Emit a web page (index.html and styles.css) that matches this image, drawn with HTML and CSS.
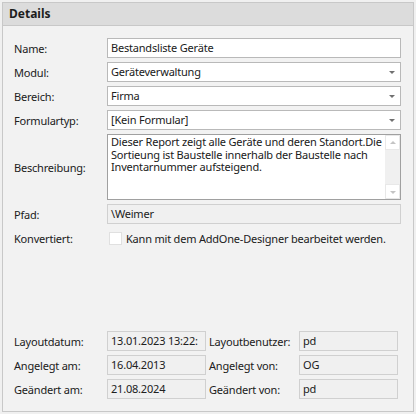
FILE: index.html
```html
<!DOCTYPE html>
<html lang="de">
<head>
<meta charset="utf-8">
<title>Details</title>
<link rel="stylesheet" href="styles.css">
</head>
<body>
<div class="panel">
  <div class="header">Details</div>
  <div class="body">
    <div class="form">
      <div class="label">Name:</div>
      <div class="field">Bestandsliste Geräte</div>

      <div class="label">Modul:</div>
      <div class="field combo">Geräteverwaltung<span class="arrow"></span></div>

      <div class="label">Bereich:</div>
      <div class="field combo">Firma<span class="arrow"></span></div>

      <div class="label">Formulartyp:</div>
      <div class="field combo">[Kein Formular]<span class="arrow"></span></div>

      <div class="label">Beschreibung:</div>
      <div class="memo">
        <div class="memo-text">Dieser Report zeigt alle Geräte und deren Standort.Die Sortieung ist Baustelle innerhalb der Baustelle nach Inventarnummer aufsteigend.</div>
        <div class="scroll">
          <div class="sbtn"><span class="up"></span></div>
          <div class="sbtn"><span class="down"></span></div>
        </div>
      </div>

      <div class="label">Pfad:</div>
      <div class="field disabled">\Weimer</div>

      <div class="label">Konvertiert:</div>
      <div class="check-row"><span class="check"></span><span>Kann mit dem AddOne-Designer bearbeitet werden.</span></div>
    </div>

    <div class="meta">
      <div class="label">Layoutdatum:</div>
      <div class="field disabled">13.01.2023 13:22:</div>
      <div class="label">Layoutbenutzer:</div>
      <div class="field disabled">pd</div>

      <div class="label">Angelegt am:</div>
      <div class="field disabled">16.04.2013</div>
      <div class="label">Angelegt von:</div>
      <div class="field disabled">OG</div>

      <div class="label">Geändert am:</div>
      <div class="field disabled">21.08.2024</div>
      <div class="label">Geändert von:</div>
      <div class="field disabled">pd</div>
    </div>
  </div>
</div>
</body>
</html>
```
FILE: styles.css
```css
html, body {
  margin: 0;
  padding: 0;
  background: #f0f0f0;
}
body {
  font-family: "Noto Sans", "Liberation Sans", sans-serif;
  font-size: 11px;
  letter-spacing: -0.2px;
  color: #202020;
  width: 416px;
  height: 414px;
  overflow: hidden;
}
.panel {
  margin: 2px;
  width: 410px;
  height: 408px;
  border: 1px solid #c8c8c8;
  background: #f2f2f2;
  display: flex;
  flex-direction: column;
}
.header {
  height: 22px;
  line-height: 22px;
  padding-left: 6px;
  background: #dcdcdc;
  border-bottom: 1px solid #c8c8c8;
  font-weight: bold;
  font-size: 12px;
  letter-spacing: 0;
  color: #1e1e1e;
}
.body {
  flex: 1;
  display: flex;
  flex-direction: column;
  padding: 12px 12px 12px 11px;
}
.form {
  display: grid;
  grid-template-columns: 93px 294px;
  row-gap: 4px;
  align-items: center;
}
.label {
  white-space: nowrap;
}
.field {
  position: relative;
  box-sizing: border-box;
  height: 20px;
  line-height: 18px;
  padding-left: 3px;
  border: 1px solid #b9b9b9;
  background: #ffffff;
  white-space: nowrap;
  overflow: hidden;
}
.field.disabled {
  background: #f0f0f0;
  border-color: #d0d0d0;
}
.arrow {
  position: absolute;
  right: 5px;
  top: 8px;
  width: 0;
  height: 0;
  border-left: 3.5px solid transparent;
  border-right: 3.5px solid transparent;
  border-top: 3px solid #707070;
}
.memo {
  box-sizing: border-box;
  height: 66px;
  border: 1px solid #a0a0a0;
  background: #ffffff;
  display: flex;
}
.memo-text {
  flex: 1;
  padding: 1px 3px 0 3px;
  line-height: 12.7px;
}
.scroll {
  width: 15px;
  background: #f0f0f0;
  display: flex;
  flex-direction: column;
  justify-content: space-between;
}
.sbtn {
  box-sizing: border-box;
  height: 15px;
  background: #ffffff;
  border: 1px solid #e8e8e8;
  position: relative;
}
.up, .down {
  position: absolute;
  left: 3.5px;
  width: 0;
  height: 0;
  border-left: 3.5px solid transparent;
  border-right: 3.5px solid transparent;
}
.up {
  top: 5px;
  border-bottom: 3px solid #c4c4c4;
}
.down {
  top: 6px;
  border-top: 3px solid #c4c4c4;
}
.check-row {
  height: 20px;
  display: flex;
  align-items: center;
  gap: 4px;
  padding-left: 2px;
  white-space: nowrap;
}
.check {
  box-sizing: border-box;
  width: 13px;
  height: 13px;
  background: #ffffff;
  border: 1px solid #e0e0e0;
}
.meta {
  margin-top: auto;
  display: grid;
  grid-template-columns: 93px 102px 90px 99px;
  row-gap: 4px;
  align-items: center;
}
.meta .field:nth-child(4n+2) {
  width: 99px;
}
```
